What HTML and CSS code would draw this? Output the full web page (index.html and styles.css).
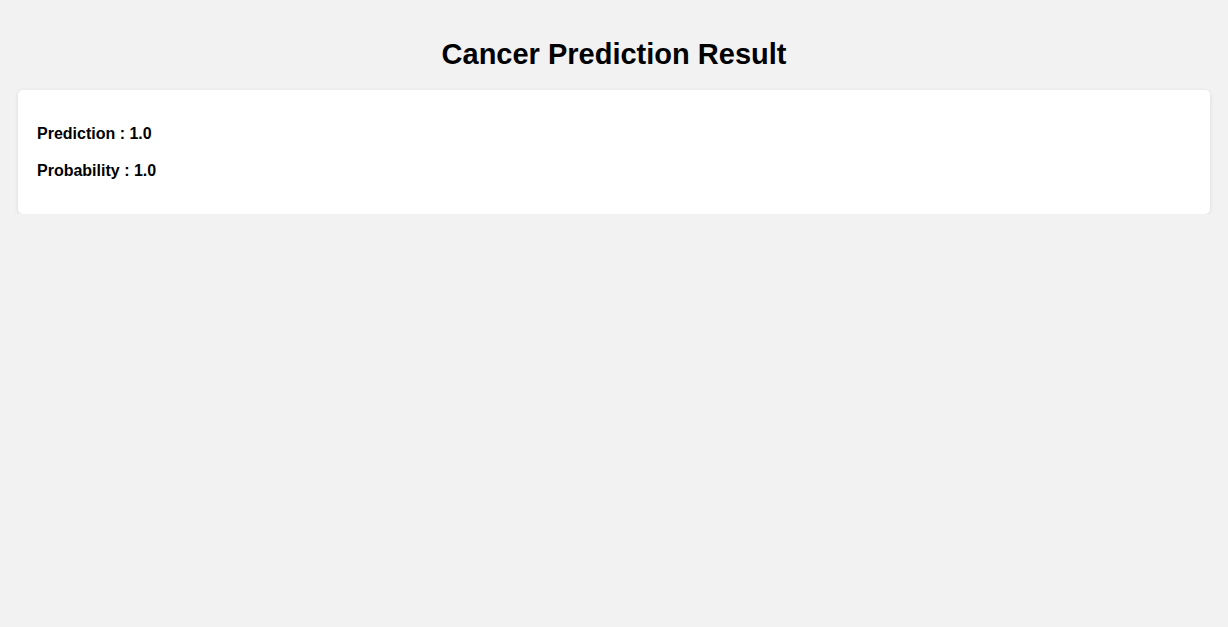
FILE: index.html
```html
<!DOCTYPE html>
<html lang="en">
<head>
<meta charset="utf-8">
<title>Cancer Prediction Result</title>
<link rel="stylesheet" href="styles.css">
</head>
<body>
<main class="page">
  <h1 class="title">Cancer Prediction Result</h1>
  <section class="card">
    <p class="row">Prediction : 1.0</p>
    <p class="row">Probability : 1.0</p>
  </section>
</main>
</body>
</html>
```
FILE: styles.css
```css
html, body {
  margin: 0;
  padding: 0;
  background: #f2f2f2;
  font-family: "Liberation Sans", Arial, sans-serif;
  color: #000;
}
.page {
  padding: 38px 18px 0;
  display: flex;
  flex-direction: column;
  gap: 19px;
}
.title {
  margin: 0;
  text-align: center;
  font-size: 29px;
  font-weight: bold;
  line-height: 33px;
}
.card {
  background: #fff;
  border-radius: 5px;
  box-shadow: 0 1px 4px rgba(0, 0, 0, 0.1);
  padding: 35px 19px 34px;
  display: flex;
  flex-direction: column;
  gap: 19px;
}
.row {
  margin: 0;
  font-size: 16px;
  font-weight: bold;
  line-height: 18px;
}
```
